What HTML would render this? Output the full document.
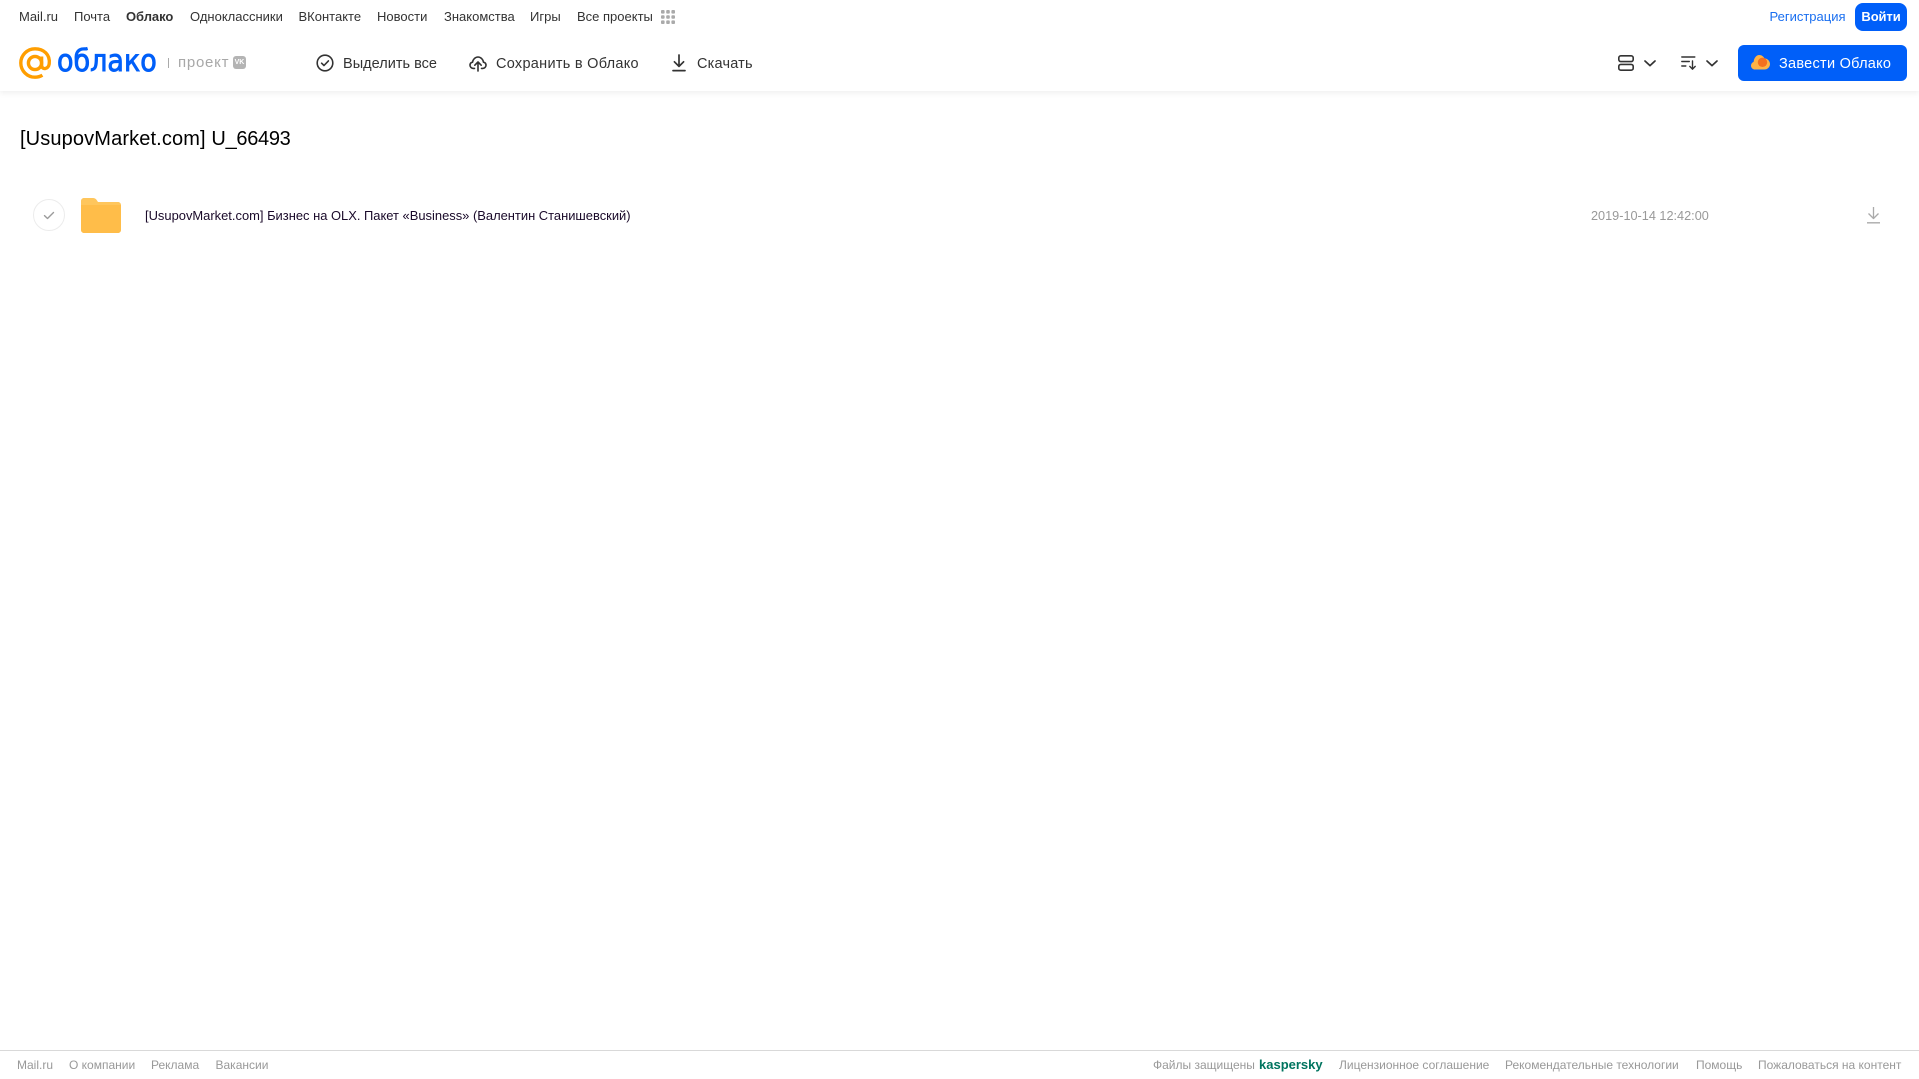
<!DOCTYPE html>
<html lang="ru">
<head>
<meta charset="utf-8">
<title>Облако</title>
<style>
html,body{margin:0;padding:0;background:#fff}
body{position:relative;width:1919px;height:1079px;overflow:hidden;font-family:"Liberation Sans",sans-serif}
.t{position:absolute;white-space:nowrap;line-height:20px;height:20px}
.n{top:7px;font-size:13px;color:#333}
.m{top:54px;font-size:14.5px;color:#333;letter-spacing:.3px}
.f{top:1055px;font-size:12px;color:#999}
svg{position:absolute;overflow:visible}
#hdr{position:absolute;left:0;top:0;width:1919px;height:91px;background:#fff;box-shadow:0 2px 6px rgba(0,0,0,.07)}
</style>
</head>
<body>
<div id="hdr"></div>

<span class="t n" style="left:19px">Mail.ru</span>
<span class="t n" style="left:74px">Почта</span>
<span class="t n" style="left:126px;font-weight:bold;letter-spacing:-.05px">Облако</span>
<span class="t n" style="left:190px">Одноклассники</span>
<span class="t n" style="left:298.5px">ВКонтакте</span>
<span class="t n" style="left:377px">Новости</span>
<span class="t n" style="left:444px">Знакомства</span>
<span class="t n" style="left:530px">Игры</span>
<span class="t n" style="left:577px">Все проекты</span>
<svg style="left:661px;top:10px" width="14" height="14" fill="#aaa">
<rect x="0" y="0" width="3.6" height="3.6" rx="1"/><rect x="5.2" y="0" width="3.6" height="3.6" rx="1"/><rect x="10.4" y="0" width="3.6" height="3.6" rx="1"/>
<rect x="0" y="5.2" width="3.6" height="3.6" rx="1"/><rect x="5.2" y="5.2" width="3.6" height="3.6" rx="1"/><rect x="10.4" y="5.2" width="3.6" height="3.6" rx="1"/>
<rect x="0" y="10.4" width="3.6" height="3.6" rx="1"/><rect x="5.2" y="10.4" width="3.6" height="3.6" rx="1"/><rect x="10.4" y="10.4" width="3.6" height="3.6" rx="1"/>
</svg>

<span class="t n" style="left:1769.5px;color:#1a6ff0">Регистрация</span>
<div style="position:absolute;left:1855px;top:3px;width:52px;height:28px;border-radius:8px;background:#005ff9;color:#fff;font-size:13px;font-weight:bold;line-height:27px;text-align:center;letter-spacing:-.1px">Войти</div>

<!-- logo -->
<svg style="left:19px;top:47px" width="33" height="33" viewBox="0 0 33 33" fill="none" stroke="#ff9e00" stroke-width="3.4">
<circle cx="16" cy="16" r="6.6"/>
<path d="M22.6 9.5v8.6c0 5 6.8 4.6 7.6-1.2C31.4 7.5 24.6 1.8 16 1.8 8.2 1.8 1.8 8.2 1.8 16S8.2 30.2 16 30.2c3 0 5.3-.7 7.4-2"/>
</svg>
<span class="t" style="left:57px;top:46px;height:32px;line-height:32px;font-size:30px;font-family:'DejaVu Sans',sans-serif;color:#005ff9;-webkit-text-stroke:.9px #005ff9;transform:scaleX(.9);transform-origin:0 50%">облако</span>
<div style="position:absolute;left:168px;top:58px;width:1px;height:10px;background:#aaa"></div>
<span class="t" style="left:178px;top:53px;font-size:15px;color:#a8a8a8;letter-spacing:.75px">проект</span>
<div style="position:absolute;left:233px;top:56px;width:13px;height:13px;border-radius:3px;background:#b4b4b4;color:#fff;font-size:7px;font-weight:bold;line-height:13px;text-align:center">VK</div>

<!-- toolbar -->
<svg style="left:316px;top:54px" width="18" height="18" viewBox="0 0 18 18" fill="none" stroke="#333" stroke-width="1.6">
<circle cx="9" cy="9" r="7.8"/><path d="M5.6 9.2l2.4 2.3 4.4-4.6" stroke-linecap="round" stroke-linejoin="round"/>
</svg>
<span class="t m" style="left:343px;letter-spacing:.02px">Выделить все</span>

<svg style="left:469px;top:54px" width="18" height="18" viewBox="0 0 18 18" fill="none" stroke="#333" stroke-width="1.6" stroke-linecap="round" stroke-linejoin="round">
<path d="M5.5 14.4H4.2C2.4 14.4 1 13 1 11.3c0-1.500 1-2.800 2.500-3.100C3.900 5.400 6.200 3 9 3s5.100 2.400 5.500 5.200c1.500.3 2.500 1.600 2.500 3.100 0 1.700-1.400 3.100-3.200 3.100h-1.300"/>
<path d="M9 17V8.2M5.8 11.2L9 8l3.200 3.200"/>
</svg>
<span class="t m" style="left:496px;letter-spacing:.28px">Сохранить в Облако</span>

<svg style="left:672px;top:54px" width="14" height="18" viewBox="0 0 14 18" fill="none" stroke="#333" stroke-width="1.7" stroke-linecap="round" stroke-linejoin="round">
<path d="M7 1v11M2.4 7.8L7 12.4l4.600-4.600M1 16.600h12"/>
</svg>
<span class="t m" style="left:697px;letter-spacing:.2px">Скачать</span>

<!-- right controls -->
<svg style="left:1618px;top:55px" width="16" height="16" viewBox="0 0 16 16" fill="none" stroke="#333" stroke-width="1.6">
<rect x=".8" y=".8" width="14.4" height="5.8" rx="2"/><rect x=".8" y="9.4" width="14.4" height="5.8" rx="2"/>
</svg>
<svg style="left:1644px;top:60px" width="12" height="7" viewBox="0 0 12 7" fill="none" stroke="#333" stroke-width="1.7" stroke-linecap="round" stroke-linejoin="round"><path d="M1 1l5 4.600L11 1"/></svg>
<svg style="left:1681px;top:56px" width="16" height="14" viewBox="0 0 16 14" fill="none" stroke="#333" stroke-width="1.4" stroke-linecap="round" stroke-linejoin="round">
<path d="M.8 1h13M.8 5.500h7.500M.8 10h4M11.500 5v8M8.800 10.400l2.700 2.800 2.700-2.800"/>
</svg>
<svg style="left:1706px;top:60px" width="12" height="7" viewBox="0 0 12 7" fill="none" stroke="#333" stroke-width="1.7" stroke-linecap="round" stroke-linejoin="round"><path d="M1 1l5 4.600L11 1"/></svg>

<div style="position:absolute;left:1738px;top:45px;width:169px;height:36px;border-radius:6px;background:#005ff9"></div>
<svg style="left:1751px;top:54px" width="19" height="16" viewBox="0 0 19 16">
<path d="M4 15.500C1.800 15.500 0 13.800 0 11.600c0-1.700 1-3.100 2.600-3.700C3 4 5.400 1 8.200 1c2.400 0 4.300 1.400 5.200 3.400 3 .1 5.600 2.600 5.600 5.600 0 3-2.400 5.500-5.500 5.500z" fill="#ffb347"/>
<circle cx="11.500" cy="8.300" r="4.700" fill="#f4701f"/>
</svg>
<span class="t m" style="left:1779px;color:#fff;letter-spacing:.27px">Завести Облако</span>

<!-- title -->
<span class="t" style="left:20px;top:126px;height:26px;line-height:26px;font-size:20px;color:#000"><span style="letter-spacing:.13px">[UsupovMarket.com] </span><span style="letter-spacing:-.3px">U_66493</span></span>

<!-- row -->
<div style="position:absolute;left:33px;top:199px;width:30px;height:30px;border:1px solid #ececec;border-radius:50%"></div>
<svg style="left:43px;top:211px" width="12" height="9" viewBox="0 0 12 9" fill="none" stroke="#9b9b9b" stroke-width="1.4" stroke-linecap="round" stroke-linejoin="round"><path d="M1.500 4.600l3 2.900 6-6"/></svg>
<svg style="left:81px;top:198px" width="40" height="35" viewBox="0 0 40 35">
<path d="M0 3c0-1.700 1.300-3 3-3h9c1.600 0 2.600.7 3.500 1.800L17 4h20c1.700 0 3 1.300 3 3v3H0z" fill="#ffc65c"/>
<path d="M0 7h40v25c0 1.700-1.300 3-3 3H3c-1.700 0-3-1.300-3-3z" fill="#ffbd49"/>
</svg>
<span class="t" style="left:145px;top:206px;font-size:12.93px;color:#1a0a2a">[UsupovMarket.com] Бизнес на OLX. Пакет «Business» (Валентин Станишевский)</span>
<span class="t" style="left:1591px;top:206px;font-size:12.7px;color:#999">2019-10-14 12:42:00</span>
<svg style="left:1867px;top:207px" width="13" height="17" viewBox="0 0 13 17" fill="none" stroke="#aaa" stroke-width="1.3" stroke-linejoin="round">
<path d="M6.500 0v11M1.500 6.500l5 5 5-5M0 15.800h13"/>
</svg>

<!-- footer -->
<div style="position:absolute;left:0;top:1050px;width:1919px;height:1px;background:#d9d9d9"></div>
<span class="t f" style="left:17px">Mail.ru</span>
<span class="t f" style="left:69px">О компании</span>
<span class="t f" style="left:151px">Реклама</span>
<span class="t f" style="left:215.5px">Вакансии</span>
<span class="t f" style="left:1153px">Файлы защищены</span>
<span class="t f" style="left:1259px;font-size:13px;font-weight:bold;color:#00745f">kaspersky</span>
<span class="t f" style="left:1339px">Лицензионное соглашение</span>
<span class="t f" style="left:1505px">Рекомендательные технологии</span>
<span class="t f" style="left:1696px">Помощь</span>
<span class="t f" style="left:1758px">Пожаловаться на контент</span>
</body>
</html>
